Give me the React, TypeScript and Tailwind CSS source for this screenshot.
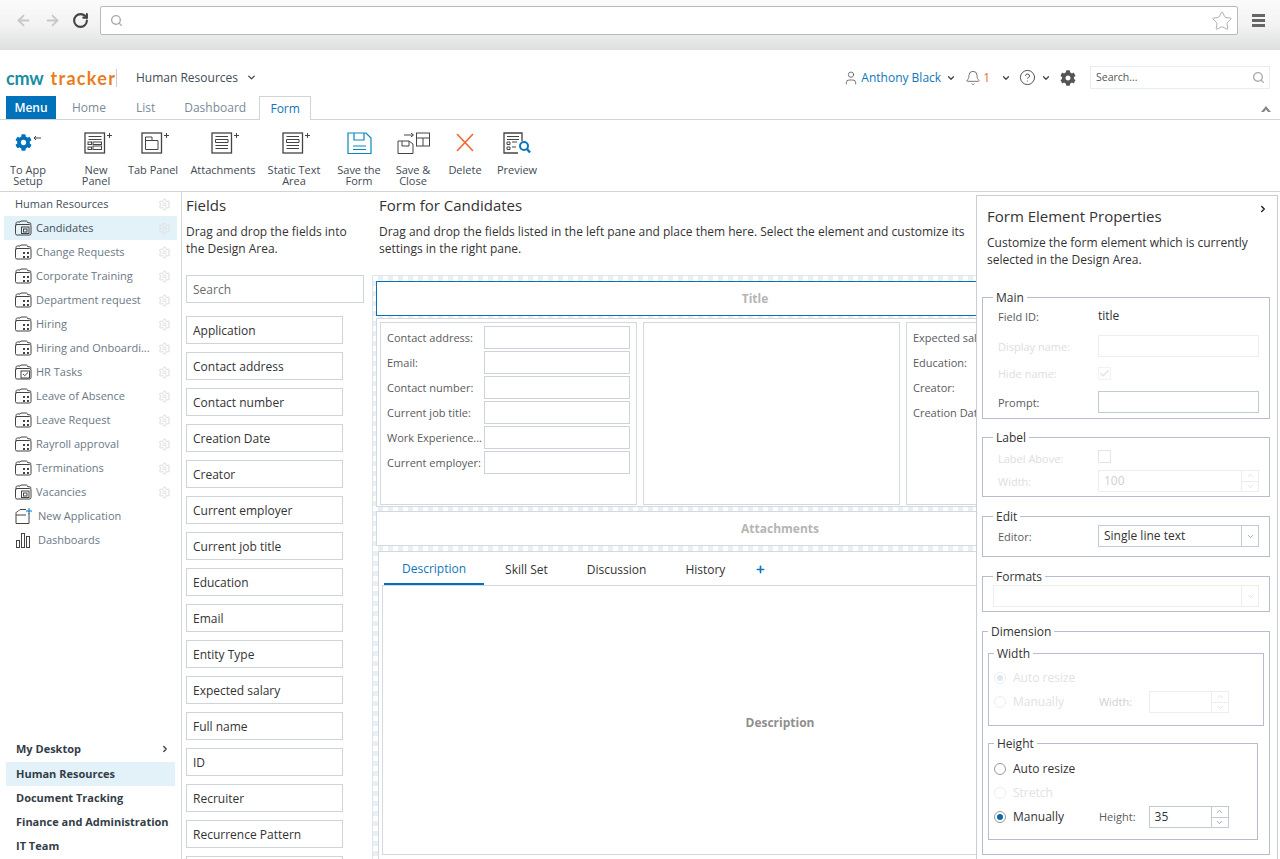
import { ArrowLeft, ArrowRight, Bell, ChevronDown, ChevronRight, ChevronUp, Check, CircleHelp, Plus, RotateCw, Search, Settings, Star, User } from "lucide-react";
import { FaCog } from "react-icons/fa";
import type { ReactNode } from "react";

type Kind = "grid" | "window" | "check";

const APPS: { name: string; kind: Kind }[] = [
  { name: "Candidates", kind: "window" },
  { name: "Change Requests", kind: "grid" },
  { name: "Corporate Training", kind: "grid" },
  { name: "Department request", kind: "grid" },
  { name: "Hiring", kind: "grid" },
  { name: "Hiring and Onboardi...", kind: "grid" },
  { name: "HR Tasks", kind: "check" },
  { name: "Leave of Absence", kind: "grid" },
  { name: "Leave Request", kind: "grid" },
  { name: "Rayroll approval", kind: "grid" },
  { name: "Terminations", kind: "grid" },
  { name: "Vacancies", kind: "window" },
];

const FIELDS = ["Application", "Contact address", "Contact number", "Creation Date", "Creator", "Current employer", "Current job title", "Education", "Email", "Entity Type", "Expected salary", "Full name", "ID", "Recruiter", "Recurrence Pattern", ""];

const FORM_ROWS = ["Contact address:", "Email:", "Contact number:", "Current job title:", "Work Experience...", "Current employer:"];

function FolderIcon({ kind }: { kind: Kind }) {
  return (
    <svg width="17" height="16" viewBox="0 0 17 16" fill="none" stroke="#444" strokeWidth="1" className="shrink-0">
      <path d="M1 5.500V3.500C1 2.500 1.500 2 2.500 2H5l1-1h5c1 0 1.500 .5 1.500 1.500L15 3c.7 0 1 .5 1 1.500" />
      <rect x="0.500" y="4.500" width="15.500" height="10.500" rx="1.500" />
      {kind === "grid" && <path d="M8 8h2v2H8zM12 8h2v2h-2zM8 12h2v2H8zM12 12h2v2h-2z" fill="#444" stroke="none" />}
      {kind === "window" && (
        <>
          <rect x="6.500" y="7" width="7.500" height="6.500" />
          <rect x="8.500" y="9" width="3.500" height="3" />
        </>
      )}
      {kind === "check" && (
        <>
          <rect x="6" y="7" width="8.500" height="7" />
          <path d="M8 10l1.700 1.700L13 8.500" />
        </>
      )}
    </svg>
  );
}

function NewAppIcon() {
  return (
    <svg width="17" height="16" viewBox="0 0 17 16" fill="none" stroke="#444" strokeWidth="1" className="shrink-0">
      <path d="M1 15.500h13V5M1 15.500V5.500C1 4 2 3.500 3 3.500L5 1.500h6" />
      <path d="M1 7h10" />
      <path d="M14 0v6M11 3h6" stroke="#0072bc" />
    </svg>
  );
}

function BarsIcon() {
  return (
    <svg width="17" height="16" viewBox="0 0 17 16" fill="none" stroke="#444" strokeWidth="1" className="shrink-0">
      <rect x="1.500" y="8.500" width="3" height="7" />
      <rect x="6.500" y="1.500" width="3" height="14" />
      <rect x="11.500" y="4.500" width="3" height="11" />
    </svg>
  );
}

// square with a small plus, used by the "add something" toolbar buttons
function DocIcon({ children }: { children: ReactNode }) {
  return (
    <svg width="30" height="22" viewBox="0 0 30 22" fill="none" stroke="#444" strokeWidth="1" className="ml-[5px] block">
      <rect x="1" y="1" width="19.500" height="20" strokeWidth="1.300" />
      <path d="M25.500 1v5M23 3.500h5" />
      {children}
    </svg>
  );
}

const ICON_NEW_PANEL = (
  <DocIcon>
    <path d="M4.500 4.500h13M4.500 7.500h13" />
    <rect x="4" y="10" width="3.500" height="2.500" />
    <rect x="9" y="10" width="8.500" height="2.500" />
    <rect x="4" y="15" width="3.500" height="2.500" />
    <rect x="9" y="14" width="8.500" height="3.500" />
  </DocIcon>
);
const ICON_TAB_PANEL = (
  <DocIcon>
    <path d="M4.500 5v12.500h12.500V8.500H11V5z" />
    <path d="M4.500 8.500H11" />
  </DocIcon>
);
const ICON_LINES = (
  <DocIcon>
    <path d="M4.500 4.500h12.500M4.500 7.500h12.500v3H4.500zM4.500 13.500h12.500M4.500 16.500h12.500" />
  </DocIcon>
);

const TOOLBAR: { label: ReactNode; box: string; icon: ReactNode }[] = [
  {
    label: <>To App<br />Setup</>,
    box: "w-[44px] ml-[6px]",
    icon: (
      <span className="flex h-[22px] items-start pt-[2px] text-[#0072bc]">
        <FaCog size={17} />
        <svg width="9" height="6" viewBox="0 0 9 6" fill="none" stroke="#444" className="mt-[1px] ml-[1px]"><path d="M8 3H1M3 1L1 3l2 2" /></svg>
      </span>
    ),
  },
  { label: <>New<br />Panel</>, box: "w-[40px] ml-[26px]", icon: ICON_NEW_PANEL },
  { label: "Tab Panel", box: "w-[50px] ml-[12px]", icon: ICON_TAB_PANEL },
  { label: "Attachments", box: "w-[66px] ml-[12px]", icon: ICON_LINES },
  { label: <>Static Text<br />Area</>, box: "w-[54px] ml-[11px]", icon: ICON_LINES },
  {
    label: <>Save the<br />Form</>,
    box: "w-[44px] ml-[16px]",
    icon: (
      <svg width="25" height="22" viewBox="0 0 25 22" fill="none" stroke="#0a85c2" strokeWidth="1.200" className="block">
        <path d="M1 1h18l5 5v15.500H1z" />
        <path d="M7 1v7h10V1M6 14h13M6 17.500h13" />
      </svg>
    ),
  },
  {
    label: <>Save &amp;<br />Close</>,
    box: "w-[36px] ml-[14px]",
    icon: (
      <svg width="33" height="22" viewBox="0 0 33 22" fill="none" stroke="#444" strokeWidth="1" className="block">
        <path d="M1 9h11l4 3v9.500H1z" />
        <path d="M5 9v5h7V9M7 3h9M14 1l2.500 2L14 5" />
        <rect x="19.500" y="1" width="13" height="13" />
        <path d="M19.500 6h13M26 6v8" />
      </svg>
    ),
  },
  {
    label: "Delete",
    box: "w-[36px] ml-[16px]",
    icon: (
      <svg width="18" height="22" viewBox="0 0 18 22" fill="none" stroke="#f26a35" strokeWidth="1.700" className="block">
        <path d="M1 2l16 17M17 2L1 19" />
      </svg>
    ),
  },
  {
    label: "Preview",
    box: "w-[40px] ml-[14px]",
    icon: (
      <svg width="28" height="22" viewBox="0 0 28 22" fill="none" stroke="#444" strokeWidth="1" className="block">
        <path d="M19 9V1H1v20h14" strokeWidth="1.300" />
        <path d="M4 4.500h12M4 7.500h12M4 10h3v2.500H4zM9 10h5M4 15h3v2.500H4zM9 15h4" />
        <circle cx="21" cy="14" r="4" stroke="#0a78bd" strokeWidth="2" />
        <path d="M24 17l3 3.500" stroke="#0a78bd" strokeWidth="2.400" />
      </svg>
    ),
  },
];

function PropRow({ label, disabled, className, labelPad, children }: { label: string; disabled?: boolean; className?: string; labelPad?: string; children: ReactNode }) {
  return (
    <div className={`flex items-center ${className ?? ""}`}>
      <span className={`w-[100px] shrink-0 text-[11px] ${labelPad ?? "pt-[3px]"} ${disabled ? "text-[#dedede]" : "text-[#5b5b5b]"}`}>{label}</span>
      {children}
    </div>
  );
}

function Box({ disabled, value, w = "w-[161px]" }: { disabled?: boolean; value?: string; w?: string }) {
  return <div className={`flex h-[22px] items-center border px-[5px] text-[12px] text-[#333] ${w} ${disabled ? "border-[#eeeeee]" : "border-[#c3cbd2]"}`}>{value}</div>;
}

function Spin({ disabled, value, w, text }: { disabled?: boolean; value?: string; w: string; text?: string }) {
  const tone = disabled ? "border-[#eeeeee]" : "border-[#c3cbd2]";
  return (
    <div className={`flex h-[22px] items-stretch border ${tone} ${w}`}>
      <span className={`flex flex-1 items-center px-[5px] text-[12px] ${text ?? "text-[#333]"}`}>{value}</span>
      <span className={`flex w-[17px] flex-col border-l ${tone}`}>
        <span className={`flex flex-1 items-center justify-center border-b ${tone}`}>
          <ChevronUp size={9} className={disabled ? "text-[#d8d8d8]" : "text-[#888]"} />
        </span>
        <span className="flex flex-1 items-center justify-center">
          <ChevronDown size={9} className={disabled ? "text-[#d8d8d8]" : "text-[#888]"} />
        </span>
      </span>
    </div>
  );
}

function Combo({ value, disabled, w }: { value?: string; disabled?: boolean; w: string }) {
  const tone = disabled ? "border-[#eeeeee]" : "border-[#c3cbd2]";
  return (
    <div className={`flex h-[22px] items-stretch border ${tone} ${w}`}>
      <span className="flex flex-1 items-center px-[5px] text-[12px] text-[#333]">{value}</span>
      <span className={`flex w-[17px] items-center justify-center border-l ${tone}`}>
        <ChevronDown size={9} className={disabled ? "text-[#d8d8d8]" : "text-[#888]"} />
      </span>
    </div>
  );
}

function Radio({ on, disabled, label }: { on?: boolean; disabled?: boolean; label: string }) {
  return (
    <span className="flex items-center">
      <span className={`flex size-[12px] shrink-0 items-center justify-center rounded-full border ${disabled ? "border-[#eeeeee]" : "border-[#9a9a9a]"}`}>
        {on && <span className={`size-[6px] rounded-full ${disabled ? "bg-[#dfe8f0]" : "bg-[#0b6aa8]"}`} />}
      </span>
      <span className={`ml-[7px] text-[12px] ${disabled ? "text-[#e2e2e2]" : "text-[#333]"}`}>{label}</span>
    </span>
  );
}

function Group({ title, className, legend, children }: { title: string; className: string; legend?: string; children: ReactNode }) {
  return (
    <fieldset className={`border border-[#b9bccb] ${className}`}>
      <legend className={`px-[3px] text-[12px] leading-[16px] text-[#333] ${legend ?? "-ml-[5px]"}`}>
        <span className="inline-block translate-y-[1px]">{title}</span>
      </legend>
      {children}
    </fieldset>
  );
}

export default function App() {
  return (
    <div className="h-[859px] w-[1280px] overflow-hidden bg-white font-['Open_Sans',sans-serif] text-[#333]">
      {/* browser chrome */}
      <div className="flex h-[50px] items-start bg-gradient-to-b from-[#fbfbfb] via-[#f3f3f3] to-[#dedfe0] pt-[6px]">
        <div className="flex h-[28px] w-[100px] items-center pl-[15px]">
          <ArrowLeft size={17} strokeWidth={2.500} className="text-[#c8c8c8]" />
          <ArrowRight size={17} strokeWidth={2.500} className="ml-[12px] text-[#c8c8c8]" />
          <RotateCw size={17} strokeWidth={3} className="ml-[11px] text-[#444]" />
        </div>
        <div className="flex h-[29px] w-[1138px] items-center rounded-[2px] border border-[#b9b9b9] bg-white pr-[4px] pl-[9px]">
          <Search size={13} strokeWidth={2.500} className="text-[#aaa]" />
          <Star size={22} strokeWidth={1} className="ml-auto text-[#a8a8a8]" />
        </div>
        <div className="ml-[14px] flex h-[28px] w-[13px] flex-col justify-center gap-[2px]">
          <span className="h-[3px] bg-[#666]" />
          <span className="h-[3px] bg-[#666]" />
          <span className="h-[3px] bg-[#666]" />
        </div>
      </div>

      {/* app header */}
      <div className="flex h-[46px] items-center pt-[9px] pl-[6px]">
        <span className="flex w-[110px] gap-[7px] font-['Lato',sans-serif] text-[18px] leading-none font-bold">
          <span className="tracking-[-0.200px] text-[#188ea6]">cmw</span>
          <span className="tracking-[1.300px] text-[#e97d1d]">tracker</span>
        </span>
        <span className="h-[18px] w-px bg-[#cccccc]" />
        <span className="ml-[19px] text-[12px] text-[#3f4a55]">Human Resources</span>
        <ChevronDown size={11} strokeWidth={3} className="ml-[8px] text-[#444]" />
        <div className="ml-auto flex items-center pr-[10px]">
          <User size={16} strokeWidth={1.200} className="text-[#555]" />
          <span className="ml-[2px] text-[12px] text-[#0f76bb]">Anthony Black</span>
          <ChevronDown size={10} strokeWidth={3} className="ml-[5px] text-[#444]" />
          <Bell size={16} strokeWidth={1.200} className="ml-[9px] text-[#555]" />
          <span className="ml-[2px] text-[12px] text-[#f26a35]">1</span>
          <ChevronDown size={10} strokeWidth={3} className="ml-[11px] text-[#444]" />
          <CircleHelp size={17} strokeWidth={1.300} className="ml-[8px] text-[#444]" />
          <ChevronDown size={10} strokeWidth={3} className="ml-[5px] text-[#444]" />
          <FaCog size={16} className="ml-[9px] text-[#555]" />
          <div className="ml-[14px] flex h-[23px] w-[180px] items-center justify-between border border-[#e6edf6] pr-[4px] pl-[5px] text-[10.500px] text-[#555]">
            Search...
            <Search size={13} strokeWidth={2.500} className="text-[#aaa]" />
          </div>
        </div>
      </div>

      {/* tabs */}
      <div className="flex h-[24px] items-stretch border-b border-[#d3d3d3] pl-[6px] text-[12px]">
        <span className="flex h-[23px] w-[50px] items-center justify-center bg-[#0072bc] font-semibold text-white">Menu</span>
        <span className="ml-[16px] flex items-center text-[#7b8a98]">Home</span>
        <span className="ml-[30px] flex items-center text-[#7b8a98]">List</span>
        <span className="ml-[29px] flex items-center text-[#7b8a98]">Dashboard</span>
        <span className="ml-[13px] flex h-[24px] w-[52px] items-center justify-center border border-b-0 border-[#d3d3d3] bg-white text-[#0f76bb]">Form</span>
        <svg width="10" height="6" viewBox="0 0 10 6" fill="#888" className="mt-[10px] mr-[9px] ml-auto"><path d="M5 0l5 6H7L5 3.500 3 6H0z" /></svg>
      </div>

      {/* ribbon */}
      <div className="flex h-[72px] border-b border-[#d3d3d3] pt-[12px]">
        {TOOLBAR.map((t, i) => (
          <div key={i} className={`flex shrink-0 flex-col items-center ${t.box}`}>
            <div className="flex h-[22px] items-center">{t.icon}</div>
            <div className="mt-[10px] text-center text-[11px] leading-[11px] whitespace-nowrap text-[#3f4a55]">{t.label}</div>
          </div>
        ))}
      </div>

      <div className="relative flex h-[667px] overflow-hidden">
        {/* apps sidebar */}
        <aside className="flex w-[182px] shrink-0 flex-col border-r border-[#d5d9dc] pb-[1px] pl-[4px] text-[11px]">
          <div className="flex h-[24px] w-[173px] items-center pr-[3px] pl-[11px] text-[#444f59]">
            Human Resources
            <Settings size={13} className="mr-[3px] ml-auto text-[#e0e3e5]" />
          </div>
          {APPS.map((a, i) => (
            <div key={a.name} className={`flex h-[24px] w-[173px] items-center pr-[3px] pl-[11px] ${i === 0 ? "bg-[#e3f1f9] text-[#444f59]" : "text-[#6b7885]"}`}>
              <FolderIcon kind={a.kind} />
              <span className="ml-[4px]">{a.name}</span>
              <Settings size={13} className="mr-[3px] ml-auto text-[#e0e3e5]" />
            </div>
          ))}
          <div className="flex h-[24px] items-center pl-[11px] text-[#6b7885]">
            <NewAppIcon />
            <span className="ml-[6px]">New Application</span>
          </div>
          <div className="flex h-[24px] items-center pl-[11px] text-[#6b7885]">
            <BarsIcon />
            <span className="ml-[6px]">Dashboards</span>
          </div>
          <nav className="mt-auto font-bold text-[#333d47]">
            <div className="ml-[2px] flex h-[24px] w-[169px] items-center pr-[5px] pb-[2px] pl-[10px]">
              My Desktop
              <ChevronRight size={10} strokeWidth={3} className="ml-auto" />
            </div>
            <div className="ml-[2px] flex h-[24px] w-[169px] items-center bg-[#e3f1f9] pl-[10px]">Human Resources</div>
            <div className="ml-[2px] flex h-[24px] items-center pl-[10px]">Document Tracking</div>
            <div className="ml-[2px] flex h-[24px] items-center pl-[10px]">Finance and Administration</div>
            <div className="ml-[2px] flex h-[24px] items-center pl-[10px]">IT Team</div>
          </nav>
        </aside>

        {/* fields list */}
        <section className="w-[190px] shrink-0 px-[4px] pt-[3px]">
          <h2 className="text-[15px] leading-[20px] text-[#333]">Fields</h2>
          <p className="mt-[8px] text-[12px] leading-[17px] text-[#333]">Drag and drop the fields into<br />the Design Area.</p>
          <div className="mt-[18px] flex h-[28px] w-[178px] items-center border border-[#cdd5da] px-[6px] pt-[2px] text-[12px] text-[#6b6b6b]">Search</div>
          <div className="mt-[13px] flex flex-col gap-[8px]">
            {FIELDS.map((f, i) => (
              <div key={i} className="flex h-[28px] w-[157px] shrink-0 items-center border border-[#cdd5da] px-[6px] pt-[2px] text-[12px] text-[#333]">{f}</div>
            ))}
          </div>
        </section>

        {/* design area */}
        <section className="w-[813px] shrink-0 pt-[3px]">
          <h2 className="pl-[7px] text-[15px] leading-[20px] text-[#333]">Form for Candidates</h2>
          <p className="mt-[8px] pl-[7px] text-[12px] leading-[17px] whitespace-nowrap text-[#333]">
            Drag and drop the fields listed in the left pane and place them here. Select the element and customize its<br />settings in the right pane.
          </p>
          <div className="mt-[18px] flex h-[600px] flex-col border border-[#dfe5ea] bg-[repeating-conic-gradient(#e8eff5_0_25%,#ffffff_0_50%)] bg-[length:10px_10px] pt-[5px] pl-[3px]">
            <div className="flex h-[35px] w-[758px] items-center justify-center border border-[#0f6fb0] bg-white text-[12px] font-bold text-[#b5b5b5]">Title</div>
            <div className="mt-[2px] flex h-[189px] gap-[6px] border border-[#d3d9de] bg-white pt-[3px] pl-[3px]">
              <div className="flex h-[183px] w-[257px] flex-col gap-[2px] border border-[#d3d9de] pt-[3px] pl-[6px]">
                {FORM_ROWS.map((r) => (
                  <div key={r} className="flex items-center">
                    <span className="w-[97px] shrink-0 pt-[2px] text-[11px] text-[#5b5b5b]">{r}</span>
                    <span className="h-[23px] w-[146px] border border-[#cdd3d8]" />
                  </div>
                ))}
              </div>
              <div className="h-[183px] w-[257px] border border-[#d3d9de]" />
              <div className="flex h-[183px] w-[257px] flex-col border border-[#d3d9de] pt-[3px] pl-[6px] text-[11px] text-[#5b5b5b]">
                <span className="flex h-[25px] shrink-0 items-center">Expected salary:</span>
                <span className="flex h-[25px] shrink-0 items-center">Education:</span>
                <span className="flex h-[25px] shrink-0 items-center">Creator:</span>
                <span className="flex h-[25px] shrink-0 items-center">Creation Date:</span>
              </div>
            </div>
            <div className="mt-[4px] flex h-[35px] items-center justify-center border border-[#d3d9de] bg-white text-[12px] font-bold text-[#b5b5b5]">Attachments</div>
            <div className="mt-[5px] ml-[2px] flex flex-1 flex-col border-t border-l border-[#d3d9de] bg-white pr-[4px] pb-[4px] pl-[5px]">
              <div className="flex h-[33px] items-stretch text-[12px] text-[#333]">
                <span className="flex items-center border-b-2 border-[#0072bc] px-[18px] pt-[2px] text-[#0f76bb]">Description</span>
                <span className="ml-[3px] flex items-center px-[18px] pt-[2px]">Skill Set</span>
                <span className="ml-[3px] flex items-center px-[18px] pt-[2px]">Discussion</span>
                <span className="ml-[3px] flex items-center px-[18px] pt-[2px]">History</span>
                <span className="ml-[12px] flex items-center pt-[1px] text-[#0f76bb]"><Plus size={11} strokeWidth={3.500} /></span>
              </div>
              <div className="-ml-[2px] flex h-[270px] items-center justify-center border border-[#d3d9de] pt-[5px] pr-[2px] text-[12px] font-bold text-[#8f8f8f]">Description</div>
            </div>
          </div>
        </section>

        {/* properties pane, floats over the design area */}
        <aside className="absolute top-[3px] right-[2px] bottom-0 w-[302px] border-x border-t border-[#c9ced6] bg-white">
          <ChevronRight size={10} strokeWidth={3.500} className="absolute top-[8px] right-[9px] text-[#222]" />
          <h2 className="pt-[10px] pl-[10px] text-[15px] leading-[20px] text-[#333]">Form Element Properties</h2>
          <p className="mt-[8px] pl-[10px] text-[12px] leading-[17px] text-[#333]">Customize the form element which is currently<br />selected in the Design Area.</p>
          <div className="mt-[21px] flex flex-col gap-[11px] pl-[5px]">
            <Group title="Main" className="-mb-[1px] h-[130px] w-[288px] pl-[15px]">
              <PropRow label="Field ID:" className="h-[22px]">
                <span className="-mt-[1px] text-[12px] text-[#333]">title</span>
              </PropRow>
              <PropRow label="Display name:" disabled className="mt-[8px]"><Box disabled /></PropRow>
              <PropRow label="Hide name:" disabled className="mt-[5px] h-[22px]">
                <span className="flex size-[13px] items-center justify-center border border-[#f2f2f2]"><Check size={13} strokeWidth={3.500} className="text-[#dfe7e8]" /></span>
              </PropRow>
              <PropRow label="Prompt:" className="mt-[7px]"><Box /></PropRow>
            </Group>
            <Group title="Label" className="h-[68px] w-[288px] pl-[15px]">
              <PropRow label="Label Above:" disabled labelPad="pt-[6px]" className="mt-[4px] h-[14px]">
                <span className="size-[13px] border border-[#e4e4e4]" />
              </PropRow>
              <PropRow label="Width:" disabled className="mt-[7px]">
                <Spin disabled value="100" w="w-[161px]" text="text-[#cfcfcf]" />
              </PropRow>
            </Group>
            <Group title="Edit" className="h-[49px] w-[288px] pl-[15px]">
              <PropRow label="Editor:" className="mt-[1px]"><Combo value="Single line text" w="w-[161px]" /></PropRow>
            </Group>
            <Group title="Formats" className="h-[44px] w-[288px] pl-[10px]" legend="ml-0">
              <div className="mt-[1px]"><Combo disabled w="w-[266px]" /></div>
            </Group>
            <Group title="Dimension" className="h-[232px] w-[288px] pl-[5px]" legend="ml-0">
              <Group title="Width" className="mt-[6px] h-[81px] w-[276px] pl-[5px]" legend="ml-0">
                <div className="mt-[5px] flex h-[24px] items-center"><Radio on disabled label="Auto resize" /></div>
                <div className="flex h-[24px] items-center">
                  <Radio disabled label="Manually" />
                  <span className="ml-[35px] text-[11px] text-[#d0d0d0]">Width:</span>
                  <span className="ml-[17px]"><Spin disabled w="w-[80px]" /></span>
                </div>
              </Group>
              <Group title="Height" className="mt-[9px] h-[105px] w-[270px] pl-[5px]" legend="ml-0">
                <div className="mt-[6px] flex h-[24px] items-center"><Radio label="Auto resize" /></div>
                <div className="flex h-[24px] items-center"><Radio disabled label="Stretch" /></div>
                <div className="flex h-[24px] items-center">
                  <Radio on label="Manually" />
                  <span className="ml-[35px] text-[11px] text-[#5b5b5b]">Height:</span>
                  <span className="ml-[13px]"><Spin value="35" w="w-[80px]" /></span>
                </div>
              </Group>
            </Group>
          </div>
        </aside>
      </div>
    </div>
  );
}
